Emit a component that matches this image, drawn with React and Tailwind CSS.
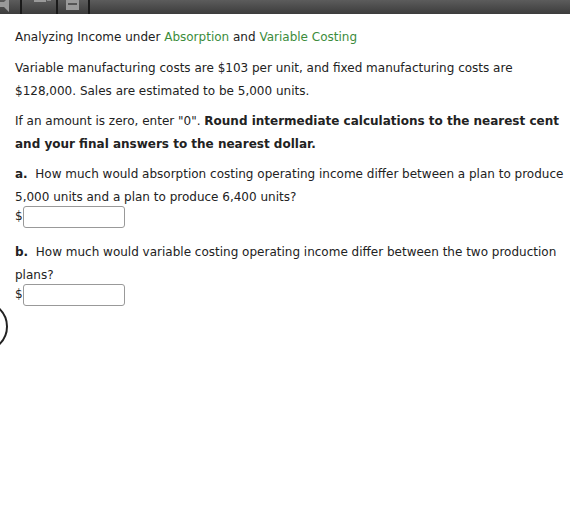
export default function App() {
  return (
    <div className="w-[570px] h-[523px] bg-white relative overflow-hidden" style={{ fontFamily: '"DejaVu Sans", Verdana, sans-serif' }}>
      <div className="h-[14px] bg-gradient-to-b from-[#5c5c5c] to-[#3c3c3c] flex">
        <div className="w-[20px] h-full relative overflow-hidden">
          <svg width="20" height="14" className="absolute left-0 top-0">
            <path d="M0 2 L4 2 L9 -3 L9 12 L4 7 L0 7 Z" fill="#9a9a9a" />
          </svg>
        </div>
        <div className="w-[2px] h-full bg-[#1a1a1a]" />
        <div className="w-[34px] h-full relative overflow-hidden">
          <svg width="34" height="14" className="absolute left-0 top-0">
            <path d="M12 -2 L12 2 L24 2 L24 -2" fill="#9a9a9a" />
            <rect x="25" y="-2" width="4" height="3" fill="#8a8a8a" />
          </svg>
        </div>
        <div className="w-[2px] h-full bg-[#1a1a1a]" />
        <div className="w-[30px] h-full relative overflow-hidden">
          <svg width="30" height="14" className="absolute left-0 top-0">
            <rect x="8" y="-2" width="13" height="12" fill="#9a9a9a" />
            <rect x="10" y="3" width="9" height="2" fill="#555" />
          </svg>
        </div>
        <div className="w-[2px] h-full bg-[#1a1a1a]" />
      </div>

      <div className="pl-[15px] pr-[2px] text-[12px] leading-[23px] text-[#222]">
        <p className="mt-[12px]">
          Analyzing Income under <span className="text-[#3c8c3c]">Absorption</span> and <span className="text-[#3c8c3c]">Variable Costing</span>
        </p>
        <p className="mt-[8px]">
          Variable manufacturing costs are $103 per unit, and fixed manufacturing costs are $128,000. Sales are estimated to be 5,000 units.
        </p>
        <p className="mt-[7px]">
          If an amount is zero, enter "0". <b>Round intermediate calculations to the nearest cent and your final answers to the nearest dollar.</b>
        </p>
        <p className="mt-[7px]">
          <b>a.</b>&nbsp; How much would absorption costing operating income differ between a plan to produce 5,000 units and a plan to produce 6,400 units?
        </p>
        <div className="flex items-center mt-[-4px]">
          <span className="text-[12px] w-[8px]">$</span>
          <div className="w-[102px] h-[22px] border border-[#999] rounded-[3px]" />
        </div>
        <p className="mt-[13px]">
          <b>b.</b>&nbsp; How much would variable costing operating income differ between the two production plans?
        </p>
        <div className="flex items-center mt-[-4px]">
          <span className="text-[12px] w-[8px]">$</span>
          <div className="w-[102px] h-[22px] border border-[#999] rounded-[3px]" />
        </div>
      </div>

      <div className="absolute left-[-43px] top-[301px] w-[51px] h-[51px] rounded-full border-[2px] border-[#222]" />
    </div>
  );
}
